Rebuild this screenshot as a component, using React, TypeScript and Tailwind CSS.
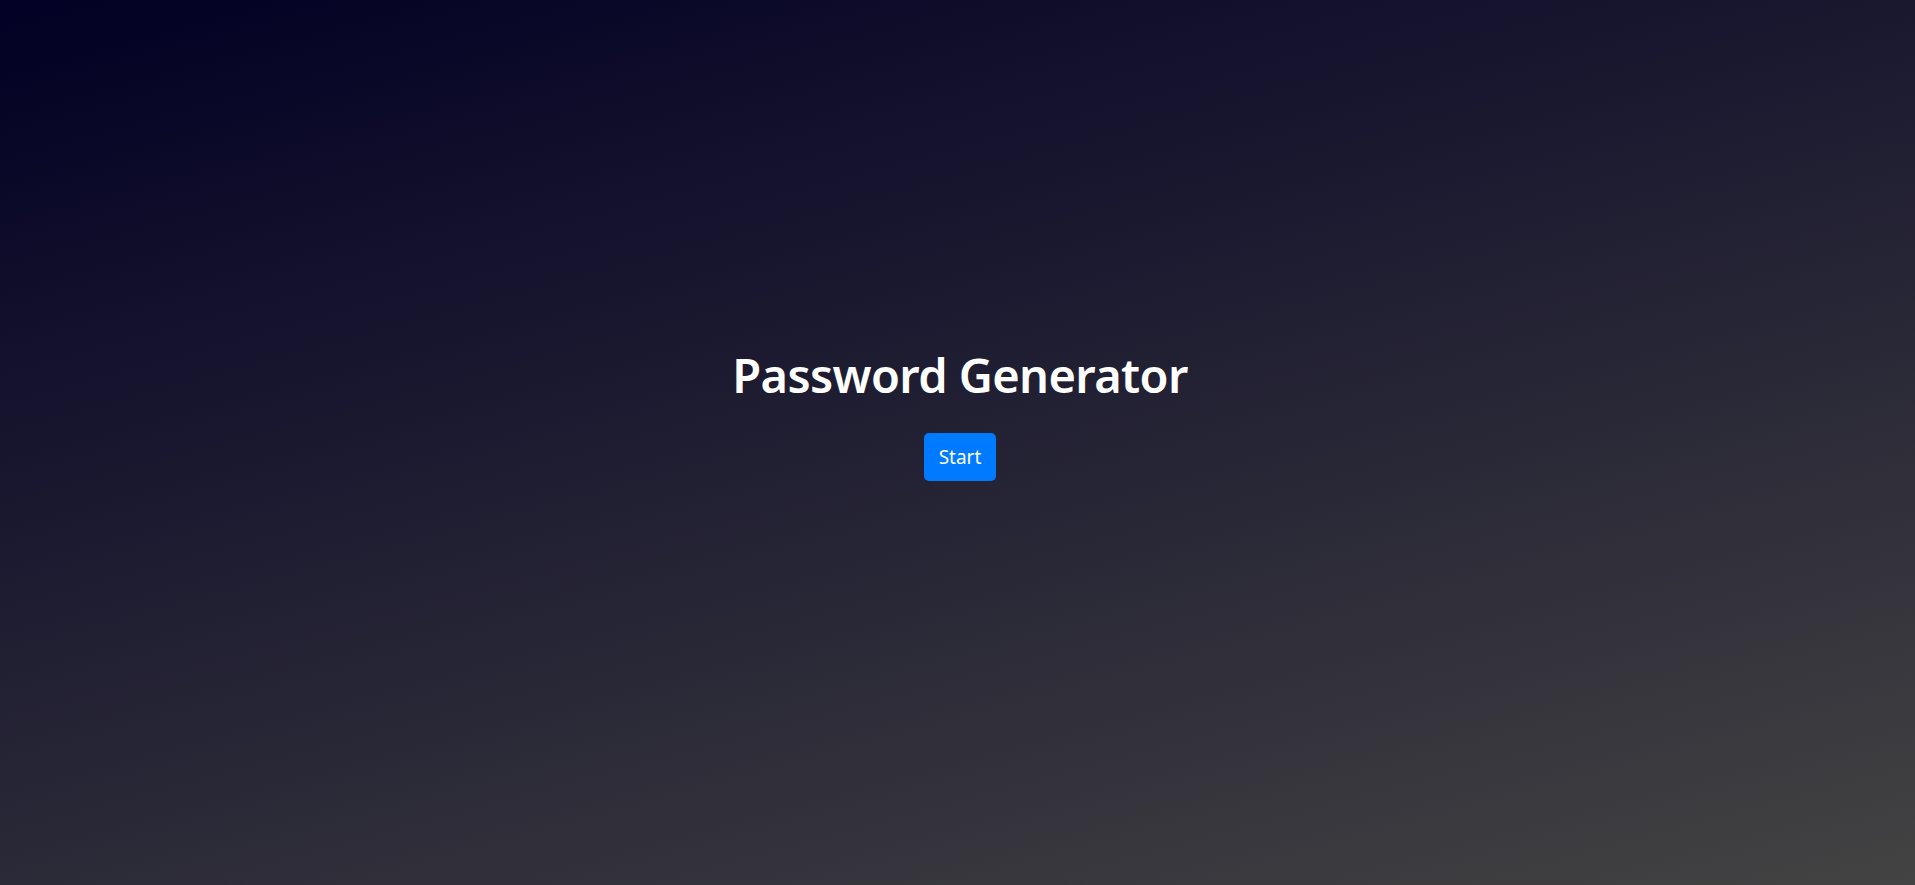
import React from 'react';

export default function App() {
  return (
    <div className="h-screen w-screen overflow-hidden bg-[linear-gradient(165deg,#020024_0%,#1c1a30_40%,#434343_100%)] font-['Noto_Sans','Open_Sans',sans-serif] text-white flex flex-col items-center justify-center pl-[5px]">
      <div className="flex flex-col items-center -mt-[60px]">
        <h1 className="text-[47px] leading-[60px] font-semibold tracking-[-0.6px]">Password Generator</h1>
        <button className="mt-[28px] h-[48px] px-[15px] pt-[2px] rounded-[5px] bg-[#007bff] text-[19px] text-white">
          Start
        </button>
      </div>
    </div>
  );
}
